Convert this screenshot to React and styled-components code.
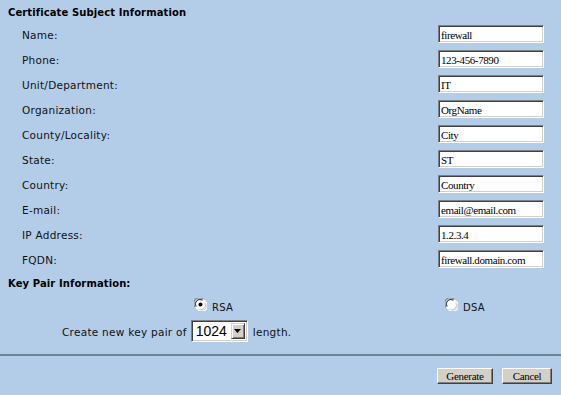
import React from "react";
import styled, { createGlobalStyle } from "styled-components";

const Global = createGlobalStyle`
  html, body { margin: 0; padding: 0; background: #b3cde9; }
  body { font-family: "DejaVu Sans", Verdana, sans-serif; color: #000; }
`;

const Page = styled.div`
  width: 561px;
  height: 395px;
  background: #b3cde9;
  display: flex;
  flex-direction: column;
  overflow: hidden;
`;

const SectionTitle = styled.div`
  font-weight: bold;
  font-size: 10px;
  letter-spacing: 0.1px;
  line-height: ${(p) => p.$lh || 17}px;
  margin-top: ${(p) => p.$mt || 0}px;
  padding-left: 8px;
`;

const Rows = styled.div`
  display: flex;
  flex-direction: column;
`;

const Row = styled.div`
  display: flex;
  align-items: flex-start;
  height: 25px;
  padding-left: 22px;
  padding-right: 17px;
`;

const Label = styled.div`
  flex: 1;
  font-size: 10.5px;
  letter-spacing: 0.25px;
  line-height: 25px;
  padding-top: 2px;
  color: #111;
`;

const TextBox = styled.input`
  box-sizing: border-box;
  width: 106px;
  height: 18px;
  margin: 4px 0 0 0;
  padding: 1px 2px 0 2px;
  background: #fff;
  border: 1px solid;
  border-color: #808080 #ffffff #ffffff #808080;
  box-shadow: inset 1px 1px 0 #404040, inset -1px -1px 0 #d4d0c8;
  font-family: "Liberation Serif", "Times New Roman", serif;
  font-size: 11px;
  letter-spacing: -0.4px;
  color: #000;
  outline: none;
`;

const RadioRow = styled.div`
  display: grid;
  grid-template-columns: 194px 251px 1fr;
  height: 17px;
`;

const RadioOption = styled.label`
  grid-column: ${(p) => p.$col};
  display: flex;
  align-items: flex-start;
  gap: 5px;
`;

const RadioIcon = styled.svg`
  margin-top: 2px;
  flex: none;
`;

const RadioText = styled.span`
  font-size: 10px;
  letter-spacing: 0.3px;
  line-height: 12px;
  margin-top: 6px;
  color: #111;
`;

const CreateRow = styled.div`
  display: flex;
  align-items: center;
  margin-top: 7px;
  padding-left: 62px;
  height: 22px;
  font-size: 10.5px;
  letter-spacing: 0.27px;
  color: #111;
`;

const CreateText = styled.span`
  padding-top: 2px;
  margin: ${(p) => p.$m || "0"};
`;

const Select = styled.div`
  box-sizing: border-box;
  width: 57px;
  height: 22px;
  display: flex;
  align-items: stretch;
  background: #fff;
  border: 1px solid;
  border-color: #808080 #ffffff #ffffff #808080;
  box-shadow: inset 1px 1px 0 #404040, inset -1px -1px 0 #d4d0c8;
  padding: 2px;
  letter-spacing: 0;
`;

const SelectValue = styled.div`
  flex: 1;
  font-family: "Liberation Sans", Arial, sans-serif;
  font-size: 14px;
  line-height: 16px;
  padding-left: 2px;
  color: #000;
`;

const DropButton = styled.div`
  box-sizing: border-box;
  width: 14px;
  background: #d4d0c8;
  border: 1px solid;
  border-color: #d4d0c8 #404040 #404040 #d4d0c8;
  box-shadow: inset 1px 1px 0 #ffffff, inset -1px -1px 0 #808080;
  display: flex;
  align-items: center;
  justify-content: center;
`;

const Separator = styled.div`
  margin-top: 12px;
  height: 2px;
  background: #6e8298;
`;

const ButtonBar = styled.div`
  display: flex;
  justify-content: flex-end;
  gap: 9px;
  padding: 12px 9px 0 0;
`;

const Button = styled.button`
  box-sizing: border-box;
  width: ${(p) => p.$w}px;
  height: 16px;
  padding: 0;
  background: #d4d0c8;
  border: 1px solid;
  border-color: #ffffff #404040 #404040 #ffffff;
  box-shadow: inset -1px -1px 0 #808080;
  font-family: "Liberation Serif", "Times New Roman", serif;
  font-size: 11px;
  letter-spacing: -0.3px;
  line-height: 13px;
  color: #000;
`;

const Radio = ({ checked }) => (
  <RadioIcon width="13" height="13" viewBox="0 0 12 12">
    <circle cx="6" cy="6" r="5.5" fill="#fff" />
    <path d="M1.2 8.5 A5 5 0 0 1 8.5 1.2" stroke="#808080" strokeWidth="1" fill="none" />
    <path d="M2.2 7.8 A4 4 0 0 1 7.8 2.2" stroke="#404040" strokeWidth="1" fill="none" />
    <path d="M10.8 3.5 A5 5 0 0 1 3.5 10.8" stroke="#ffffff" strokeWidth="1" fill="none" />
    <path d="M9.8 4.2 A4 4 0 0 1 4.2 9.8" stroke="#d4d0c8" strokeWidth="1" fill="none" />
    {checked && <circle cx="6" cy="6" r="1.8" fill="#000" />}
  </RadioIcon>
);

const fields = [
  ["Name:", "firewall"],
  ["Phone:", "123-456-7890"],
  ["Unit/Department:", "IT"],
  ["Organization:", "OrgName"],
  ["County/Locality:", "City"],
  ["State:", "ST"],
  ["Country:", "Country"],
  ["E-mail:", "email@email.com"],
  ["IP Address:", "1.2.3.4"],
  ["FQDN:", "firewall.domain.com"],
];

export default function App() {
  return (
    <Page>
      <Global />
      <SectionTitle $mt={4} $lh={17}>Certificate Subject Information</SectionTitle>
      <Rows>
        {fields.map(([label, value]) => (
          <Row key={label}>
            <Label>{label}</Label>
            <TextBox defaultValue={value} />
          </Row>
        ))}
      </Rows>
      <SectionTitle $lh={25}>Key Pair Information:</SectionTitle>
      <RadioRow>
        <RadioOption $col={2}>
          <Radio checked />
          <RadioText>RSA</RadioText>
        </RadioOption>
        <RadioOption $col={3}>
          <Radio />
          <RadioText>DSA</RadioText>
        </RadioOption>
      </RadioRow>
      <CreateRow>
        <CreateText $m="0 4px 0 0">Create new key pair of</CreateText>
        <Select>
          <SelectValue>1024</SelectValue>
          <DropButton>
            <svg width="7" height="4" viewBox="0 0 7 4">
              <path d="M0 0 H7 L3.5 4 Z" fill="#000" />
            </svg>
          </DropButton>
        </Select>
        <CreateText $m="0 0 0 5px">length.</CreateText>
      </CreateRow>
      <Separator />
      <ButtonBar>
        <Button $w={56}>Generate</Button>
        <Button $w={50}>Cancel</Button>
      </ButtonBar>
    </Page>
  );
}
